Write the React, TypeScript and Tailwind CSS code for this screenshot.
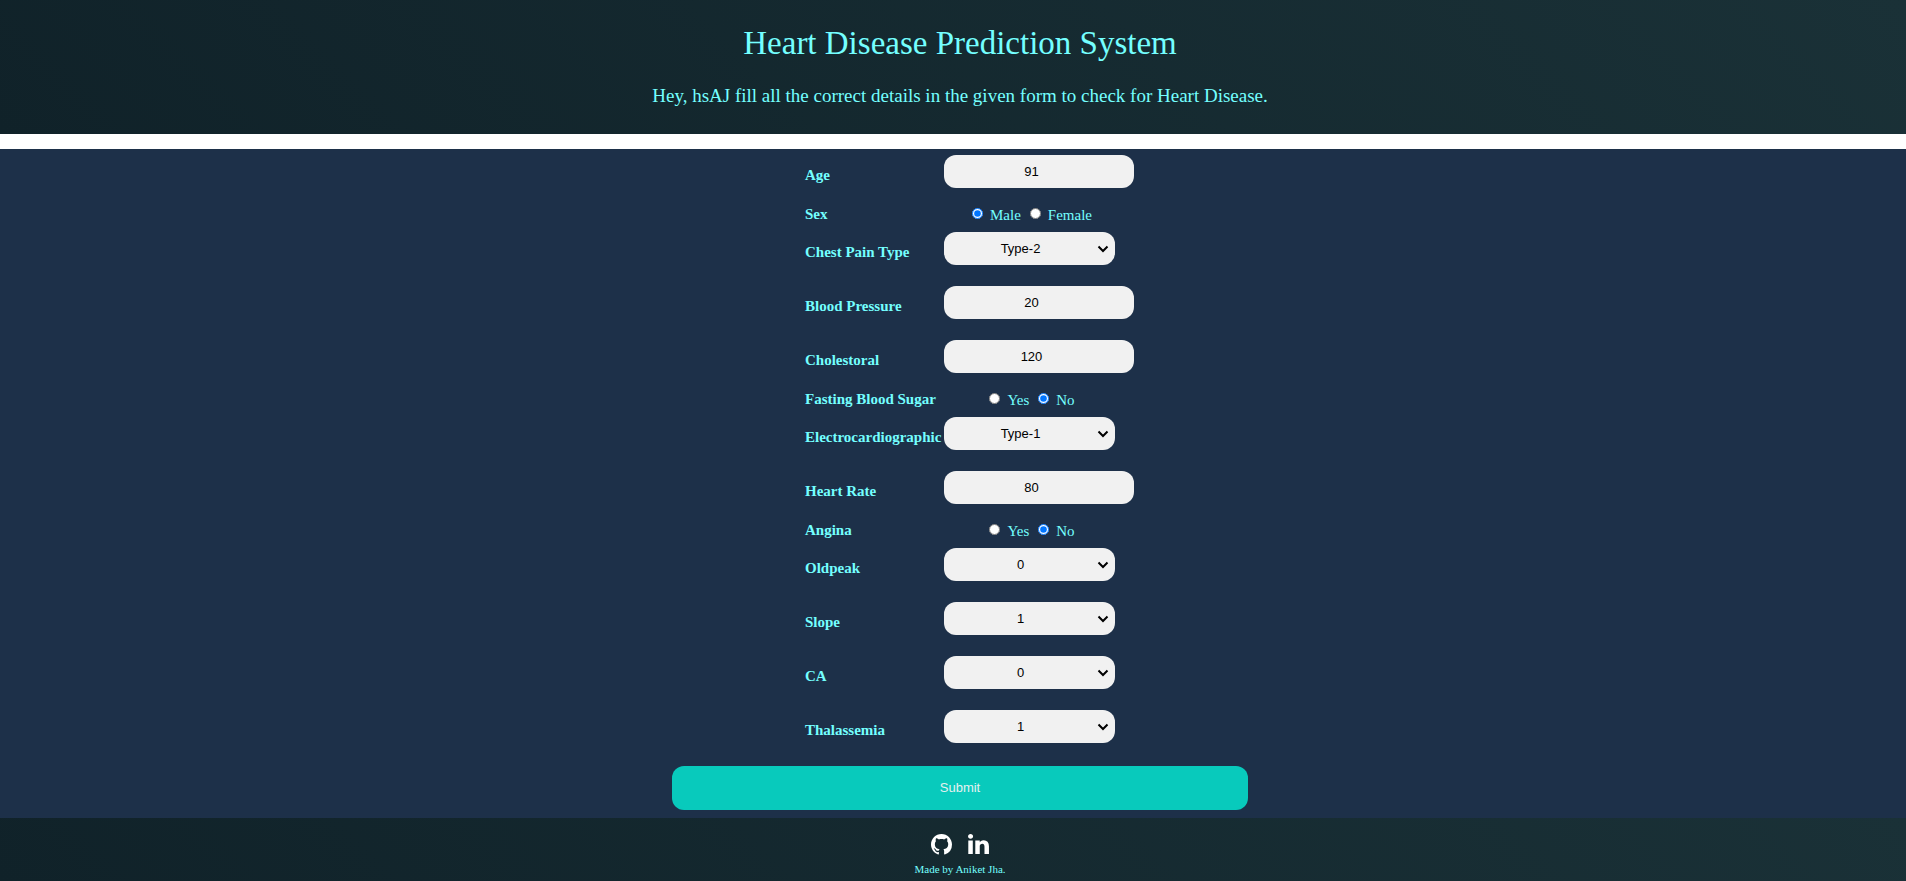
import type { ReactNode } from "react";
import { BsGithub } from "react-icons/bs";

type Field =
  | { kind: "number"; name: string; label: string; value: string }
  | { kind: "select"; name: string; label: string; value: string; options: string[] }
  | { kind: "radio"; name: string; label: string; value: string; options: string[] };

const fields: Field[] = [
  { kind: "number", name: "age", label: "Age", value: "91" },
  { kind: "radio", name: "sex", label: "Sex", value: "Male", options: ["Male", "Female"] },
  { kind: "select", name: "cp", label: "Chest Pain Type", value: "Type-2", options: ["Type-0", "Type-1", "Type-2", "Type-3"] },
  { kind: "number", name: "trestbps", label: "Blood Pressure", value: "20" },
  { kind: "number", name: "chol", label: "Cholestoral", value: "120" },
  { kind: "radio", name: "fbs", label: "Fasting Blood Sugar", value: "No", options: ["Yes", "No"] },
  { kind: "select", name: "restecg", label: "Electrocardiographic", value: "Type-1", options: ["Type-0", "Type-1", "Type-2"] },
  { kind: "number", name: "thalach", label: "Heart Rate", value: "80" },
  { kind: "radio", name: "exang", label: "Angina", value: "No", options: ["Yes", "No"] },
  { kind: "select", name: "oldpeak", label: "Oldpeak", value: "0", options: ["0", "1", "2", "3", "4"] },
  { kind: "select", name: "slope", label: "Slope", value: "1", options: ["0", "1", "2"] },
  { kind: "select", name: "ca", label: "CA", value: "0", options: ["0", "1", "2", "3"] },
  { kind: "select", name: "thal", label: "Thalassemia", value: "1", options: ["0", "1", "2", "3"] },
];

const controlClass =
  "block h-[33px] rounded-xl border-0 bg-[#f1f1f1] text-center font-['Liberation_Sans',sans-serif] text-[13px] text-black";

function LinkedInIcon() {
  return (
    <svg viewBox="0 0 1536 1468" className="h-5 w-[21px]" fill="currentColor" aria-hidden="true">
      <path
        transform="matrix(1 0 0 -1 0 1388)"
        d="M349 911v-991h-330v991h330zM370 1217q1 -73 -50.5 -122t-135.5 -49h-2q-82 0 -132 49t-50 122q0 74 51.5 122.5t134.5 48.5t133 -48.5t51 -122.5zM1536 488v-568h-329v530q0 105 -40.5 164.5t-126.5 59.5q-63 0 -105.5 -34.5t-63.5 -85.5q-11 -30 -11 -81v-553h-329q2 399 2 647t-1 296l-1 48h329v-144h-2q20 32 41 56t56.5 52t87 43.5t114.5 15.5q171 0 275 -113.5t104 -332.5z"
      />
    </svg>
  );
}

function Chevron() {
  return (
    <svg
      viewBox="0 0 12 8"
      className="pointer-events-none absolute top-[13px] right-1.5 h-2 w-3 text-black"
      fill="none"
      stroke="currentColor"
      strokeWidth="2"
      aria-hidden="true"
    >
      <path d="M1.5 1.5 6 6l4.500-4.500" />
    </svg>
  );
}

function Row({ label, children }: { label: ReactNode; children: ReactNode }) {
  return (
    <div className="flex items-center">
      <div className="w-[139px] shrink-0 pb-0.5 font-bold">{label}</div>
      {children}
    </div>
  );
}

function FieldRow({ field }: { field: Field }) {
  if (field.kind === "radio") {
    return (
      <div role="radiogroup" aria-label={field.label}>
        <Row label={field.label}>
          <div className="flex h-[23px] w-[171px] justify-center pr-1">
            {field.options.map((option) => (
              <label key={option} className="flex items-center gap-[7px] pl-[9px]">
                <input type="radio" name={field.name} defaultChecked={option === field.value} className="mb-0.5 size-[11px]" />
                {option}
              </label>
            ))}
          </div>
        </Row>
      </div>
    );
  }
  return (
    <Row label={<label htmlFor={field.name}>{field.label}</label>}>
      <div className="pt-1.5 pb-[15px]">
        {field.kind === "number" ? (
          <input id={field.name} name={field.name} type="number" defaultValue={field.value} className={`${controlClass} w-[190px]`} />
        ) : (
          <div className="relative w-[171px]">
            <select id={field.name} name={field.name} defaultValue={field.value} className={`${controlClass} w-full appearance-none pr-[18px]`}>
              {field.options.map((option) => (
                <option key={option}>{option}</option>
              ))}
            </select>
            <Chevron />
          </div>
        )}
      </div>
    </Row>
  );
}

export default function App() {
  return (
    <div className="bg-white font-['Liberation_Serif',serif] text-[#74ffff]">
      <header className="bg-linear-45 from-[#102229] to-[#1a3137] pt-[23px] pb-[27px] pl-3.5 text-center">
        <h1 className="text-[33px] leading-10">Heart Disease Prediction System</h1>
        <p className="mt-[22px] text-[19px] leading-[22px]">
          Hey, hsAJ fill all the correct details in the given form to check for Heart Disease.
        </p>
      </header>
      <main className="mt-[15px] bg-[#1d3049] pb-2 pl-3.5">
        <form className="flex flex-col items-center" onSubmit={(event) => event.preventDefault()}>
          <div className="w-[310px] text-[15px] leading-[18px]">
            {fields.map((field) => (
              <FieldRow key={field.name} field={field} />
            ))}
          </div>
          <button
            type="submit"
            className="mt-2 h-11 w-full max-w-[576px] rounded-xl bg-[#08cabc] font-['Liberation_Sans',sans-serif] text-[13px] text-[#e4f1f0]"
          >
            Submit
          </button>
        </form>
      </main>
      <footer className="flex flex-col items-center bg-linear-45 from-[#102229] to-[#1a3137] pt-4 pb-1 pl-3.5 text-[11px] leading-4">
        <div className="flex gap-4 pb-1.5 text-white">
          <a href="https://github.com" aria-label="GitHub">
            <BsGithub className="size-[21px]" />
          </a>
          <a href="https://linkedin.com" aria-label="LinkedIn">
            <LinkedInIcon />
          </a>
        </div>
        <p>Made by Aniket Jha.</p>
      </footer>
    </div>
  );
}
